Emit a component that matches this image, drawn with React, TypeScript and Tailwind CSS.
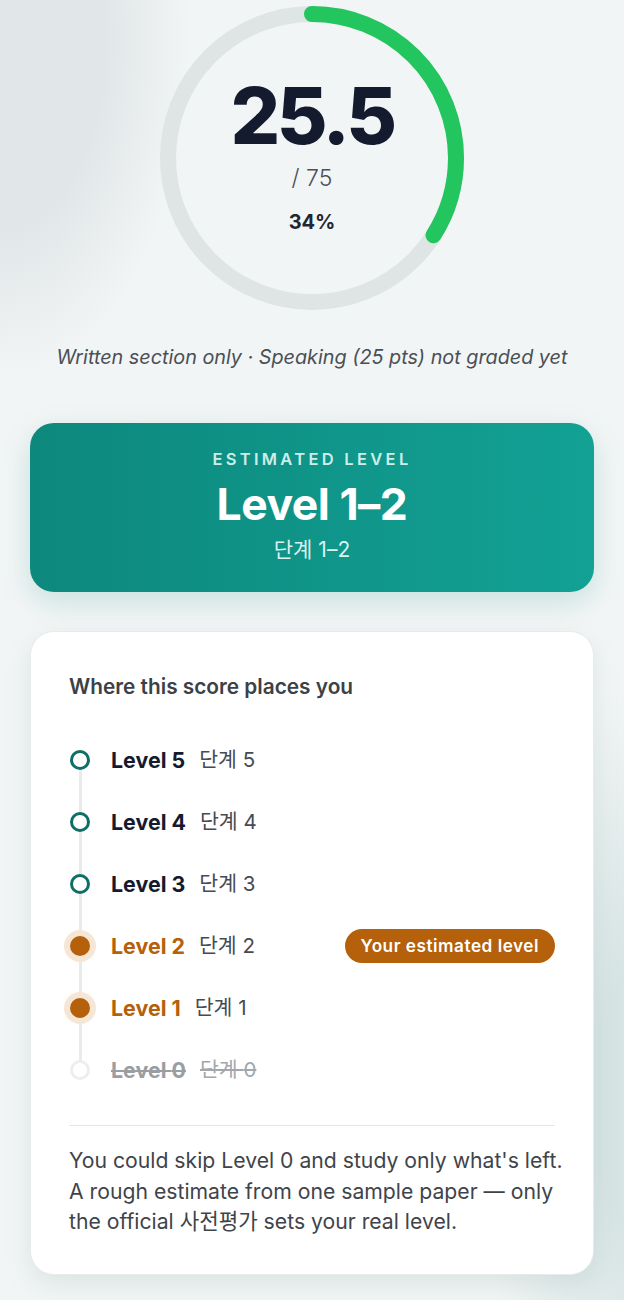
import React from "react";

type Row = {
  level: number;
  state: "above" | "current" | "passed";
  badge?: boolean;
};

const rows: Row[] = [
  { level: 5, state: "above" },
  { level: 4, state: "above" },
  { level: 3, state: "above" },
  { level: 2, state: "current", badge: true },
  { level: 1, state: "current" },
  { level: 0, state: "passed" },
];

function ScoreRing({ score, total }: { score: number; total: number }) {
  const pct = score / total;
  const r = 144;
  const c = 2 * Math.PI * r;
  return (
    <div className="relative w-[304px] h-[304px] mx-auto">
      <svg width="304" height="304" viewBox="0 0 304 304" className="-rotate-90">
        <circle cx="152" cy="152" r={r} fill="none" stroke="#dfe4e4" strokeWidth="16" />
        <circle
          cx="152"
          cy="152"
          r={r}
          fill="none"
          stroke="#22c55e"
          strokeWidth="16"
          strokeLinecap="round"
          strokeDasharray={`${c * pct} ${c}`}
        />
      </svg>
      {/* centre text sits over the ring */}
      <div className="absolute inset-0 flex flex-col items-center pt-[70px]">
        <span className="text-[78px] leading-[80px] font-extrabold tracking-[-3.5px] text-[#151b2e]">25.5</span>
        <span className="mt-[7px] text-[23px] leading-[30px] font-light text-[#4b5057]">/ {total}</span>
        <span className="mt-[15px] text-[20px] leading-[28px] font-bold text-[#1f2633]">34%</span>
      </div>
    </div>
  );
}

function Dot({ state }: { state: Row["state"] }) {
  if (state === "current") {
    return <span className="block w-5 h-5 rounded-full bg-[#b5600a] ring-[6px] ring-[#f6e6d6]" />;
  }
  if (state === "passed") {
    return <span className="block w-5 h-5 rounded-full bg-white border-[3px] border-[#eceeef]" />;
  }
  return <span className="block w-5 h-5 rounded-full bg-white border-[3px] border-[#0f6f67]" />;
}

export default function App() {
  return (
    <div
      className="min-h-[1300px] w-full px-[30px] pt-[6px] pb-[25px] bg-[#f2f5f5] bg-[radial-gradient(ellipse_190px_340px_at_0px_40px,#e1e6e8_55%,transparent_100%),radial-gradient(ellipse_160px_420px_at_640px_1100px,#d6e4e3_30%,transparent_100%)]"
      style={{ fontFamily: 'Inter, "Noto Sans CJK KR", "Noto Sans", sans-serif' }}
    >
      <ScoreRing score={25.5} total={75} />

      <p className="mt-[33px] text-center italic text-[19.8px] leading-[28px] text-[#4a4f56]">
        Written section only · Speaking (25 pts) not graded yet
      </p>

      {/* estimated level */}
      <div className="mt-[52px] h-[169px] rounded-[24px] bg-gradient-to-r from-[#0d887d] to-[#12a194] shadow-[0_10px_30px_rgba(13,136,125,0.18)] flex flex-col items-center pt-[24px]">
        <span className="text-[16.5px] leading-[24px] font-semibold tracking-[0.2em] text-[#cdeee8]">ESTIMATED LEVEL</span>
        <span className="mt-[7px] text-[44.5px] leading-[52px] font-bold tracking-[-0.5px] text-white">Level 1–2</span>
        <span className="mt-[6px] text-[21px] leading-[28px] text-[#d8f2ee]">단계 1–2</span>
      </div>

      {/* placement card */}
      <div className="mt-[39px] rounded-[24px] bg-white border border-[#e7ebeb] shadow-[0_10px_24px_rgba(120,160,155,0.18)] px-[38px] pt-[41px] pb-[37px]">
        <h2 className="text-[20.8px] leading-[28px] font-semibold text-[#3c4146]">Where this score places you</h2>

        <div className="relative mt-[28px]">
          <span className="absolute left-[9.5px] top-[31px] bottom-[31px] w-[3px] bg-[#e8eaeb]" />
          {rows.map((row) => {
            const passed = row.state === "passed";
            const current = row.state === "current";
            return (
              <div key={row.level} className="relative flex items-center h-[62px] pl-px">
                <Dot state={row.state} />
                <span
                  className={`ml-[21px] text-[21.4px] leading-[28px] font-bold ${
                    current ? "text-[#b5600a]" : passed ? "text-[#9a9ea3] line-through" : "text-[#151b2e]"
                  }`}
                >
                  Level {row.level}
                </span>
                <span
                  className={`ml-[14px] text-[20.5px] leading-[28px] ${
                    passed ? "text-[#a3a7ab] line-through" : "text-[#464b52]"
                  }`}
                >
                  단계 {row.level}
                </span>
                {row.badge && (
                  <span className="ml-auto h-[34px] px-[16px] rounded-full bg-[#b5600a] text-white text-[17.2px] font-semibold tracking-[0.03em] flex items-center">
                    Your estimated level
                  </span>
                )}
              </div>
            );
          })}
        </div>

        <div className="mt-[24px] h-px bg-[#e5e7e8]" />

        <p className="mt-[19px] text-[21.2px] leading-[30.5px] text-[#3f444a] whitespace-nowrap">
          You could skip Level 0 and study only what's left.
          <br />
          A rough estimate from one sample paper — only
          <br />
          the official 사전평가 sets your real level.
        </p>
      </div>
    </div>
  );
}
